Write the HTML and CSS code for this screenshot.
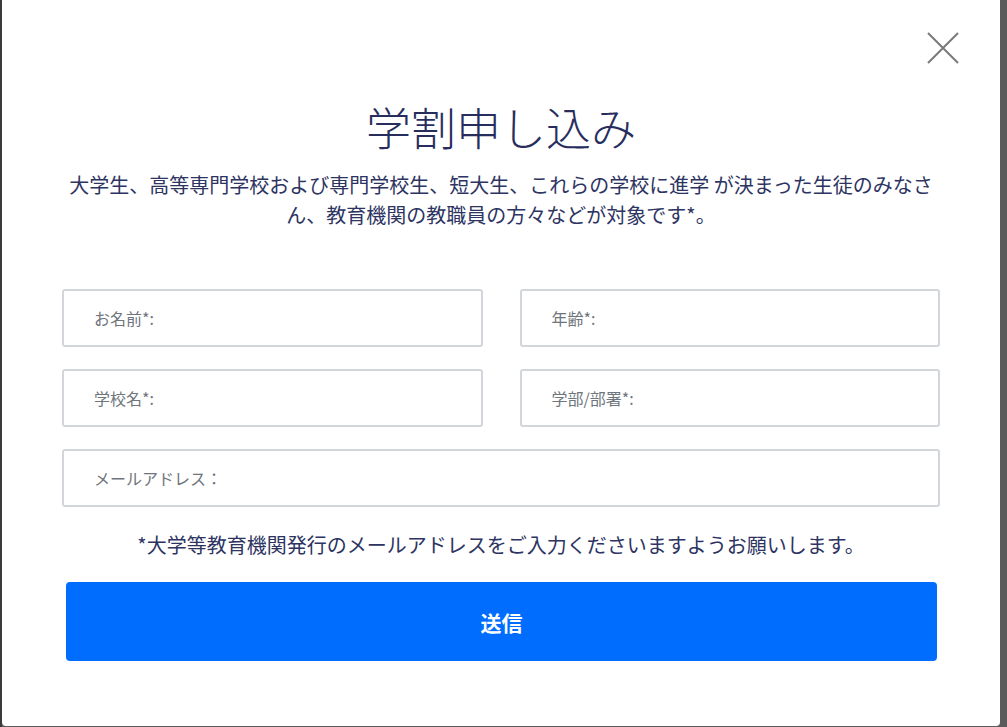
FILE: index.html
```html
<!DOCTYPE html>
<html lang="ja">
<head>
<meta charset="utf-8">
<title>学割申し込み</title>
<link rel="stylesheet" href="styles.css">
</head>
<body>
<div class="backdrop">
  <div class="modal">
    <button class="close" type="button" aria-label="閉じる">
      <svg width="32" height="32" viewBox="0 0 32 32" fill="none" stroke="#7a7a7a" stroke-width="2">
        <path d="M1 1 L31 31 M31 1 L1 31"/>
      </svg>
    </button>
    <h1 class="title">学割申し込み</h1>
    <p class="desc">大学生、高等専門学校および専門学校生、短大生、これらの学校に進学 が決まった生徒のみなさん、教育機関の教職員の方々などが対象です*。</p>
    <form class="form">
      <div class="grid">
        <input class="field" type="text" placeholder="お名前*:">
        <input class="field" type="text" placeholder="年齢*:">
        <input class="field" type="text" placeholder="学校名*:">
        <input class="field" type="text" placeholder="学部/部署*:">
        <input class="field wide" type="email" placeholder="メールアドレス：">
      </div>
      <p class="note">*大学等教育機関発行のメールアドレスをご入力くださいますようお願いします。</p>
      <button class="submit" type="button">送信</button>
    </form>
  </div>
</div>
</body>
</html>
```

FILE: styles.css
```css
html, body {
  margin: 0;
  padding: 0;
  height: 100%;
}
body {
  background: #5b5b5b;
  font-family: "Noto Sans CJK JP", "Noto Sans", sans-serif;
  overflow: hidden;
}
.backdrop {
  display: flex;
  padding-left: 2px;
  border-left: 0;
  background: linear-gradient(to right, #3a3a3a 0 2px, transparent 2px);
  height: 100%;
  box-sizing: border-box;
}
.modal {
  position: relative;
  width: 998px;
  height: 726px;
  background: #fff;
  border-radius: 0 0 4px 4px;
  padding: 95px 60px 0;
  box-sizing: border-box;
  display: flex;
  flex-direction: column;
}
.close {
  position: absolute;
  top: 32px;
  right: 41px;
  width: 32px;
  height: 32px;
  padding: 0;
  border: 0;
  background: none;
  cursor: pointer;
}
.close svg { display: block; }
.title {
  margin: 0;
  text-align: center;
  font-size: 45px;
  line-height: 63px;
  font-weight: 300;
  color: #272e5e;
}
.desc {
  margin: 12px 0 0;
  text-align: center;
  font-size: 20px;
  line-height: 30px;
  color: #2d3462;
}
.form {
  margin-top: 59px;
  display: flex;
  flex-direction: column;
}
.grid {
  display: grid;
  grid-template-columns: 1fr 1fr;
  column-gap: 37px;
  row-gap: 22px;
}
.field {
  height: 58px;
  box-sizing: border-box;
  border: 2px solid #d2d5da;
  border-radius: 3px;
  padding: 0 30px;
  font-family: inherit;
  font-size: 16px;
  color: #333;
  background: #fff;
  outline: none;
  min-width: 0;
}
.field::placeholder {
  color: #6f757c;
}
.wide {
  grid-column: 1 / -1;
}
.note {
  margin: 23px 0 0;
  text-align: center;
  font-size: 20px;
  line-height: 30px;
  color: #2d3462;
}
.submit {
  margin: 22px 3px 0 4px;
  height: 79px;
  border: 0;
  border-radius: 4px;
  background: #006dff;
  color: #fff;
  font-family: inherit;
  font-size: 21px;
  font-weight: 700;
  cursor: pointer;
}
```
